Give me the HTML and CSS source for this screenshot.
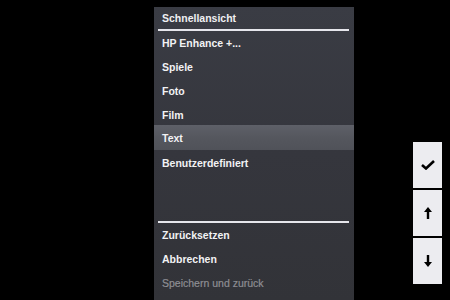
FILE: index.html
```html
<!DOCTYPE html>
<html>
<head>
<meta charset="utf-8">
<link rel="stylesheet" href="styles.css">
</head>
<body>
<div class="screen">
  <div class="menu">
    <div class="header">Schnellansicht</div>
    <div class="sep"></div>
    <div class="item">HP Enhance +...</div>
    <div class="item">Spiele</div>
    <div class="item">Foto</div>
    <div class="item">Film</div>
    <div class="item selected">Text</div>
    <div class="item">Benutzerdefiniert</div>
    <div class="spacer"></div>
    <div class="sep"></div>
    <div class="item">Zurücksetzen</div>
    <div class="item">Abbrechen</div>
    <div class="item disabled">Speichern und zurück</div>
  </div>
  <div class="buttons">
    <div class="btn">
      <svg width="14" height="10" viewBox="0 0 14 10"><path d="M1 5 L5 8.5 L13 1" fill="none" stroke="#000" stroke-width="2.6" stroke-linejoin="miter"/></svg>
    </div>
    <div class="btn">
      <svg width="8" height="12" viewBox="0 0 8 12"><path d="M4 0 L8 5 L5.2 5 L5.2 12 L2.8 12 L2.8 5 L0 5 Z" fill="#000"/></svg>
    </div>
    <div class="btn">
      <svg width="8" height="12" viewBox="0 0 8 12"><path d="M4 12 L8 7 L5.2 7 L5.2 0 L2.8 0 L2.8 7 L0 7 Z" fill="#000"/></svg>
    </div>
  </div>
</div>
</body>
</html>
```

FILE: styles.css
```css
html, body {
  margin: 0;
  padding: 0;
  background: #000;
  width: 450px;
  height: 300px;
  overflow: hidden;
}
.screen {
  display: flex;
  align-items: flex-start;
  height: 300px;
  font-family: "Liberation Sans", Arial, sans-serif;
}
.menu {
  margin-left: 154px;
  margin-top: 7px;
  width: 200px;
  height: 293px;
  padding-bottom: 5px;
  box-sizing: border-box;
  background: linear-gradient(180deg, #3a3c44 0%, #35363d 50%, #323338 100%);
  display: flex;
  flex-direction: column;
}
.header {
  height: 22px;
  line-height: 23px;
  padding-left: 8px;
  font-size: 10.5px;
  font-weight: 700;
  color: #f0f0f2;
}
.sep {
  height: 2px;
  margin: 0 5px 0 4px;
  background: #e6e6ec;
  flex: none;
}
.item {
  height: 24px;
  line-height: 24px;
  padding-left: 8px;
  font-size: 10.5px;
  font-weight: 700;
  color: #f2f2f4;
  flex: none;
}
.item.selected {
  background: linear-gradient(180deg, #5e6068 0%, #55575e 50%, #505259 100%);
  margin-top: -2px;
  height: 25px;
  line-height: 26px;
  margin-bottom: 1px;
}
.item.disabled {
  color: #8e8e94;
  font-weight: 400;
  -webkit-text-stroke: 0.2px #8e8e94;
}
.spacer {
  flex: 1;
}
.buttons {
  margin-left: 59px;
  margin-top: 142px;
  width: 29px;
  display: flex;
  flex-direction: column;
  gap: 2px;
}
.btn {
  height: 46px;
  background: #ececf0;
  display: flex;
  align-items: center;
  justify-content: center;
}
```
